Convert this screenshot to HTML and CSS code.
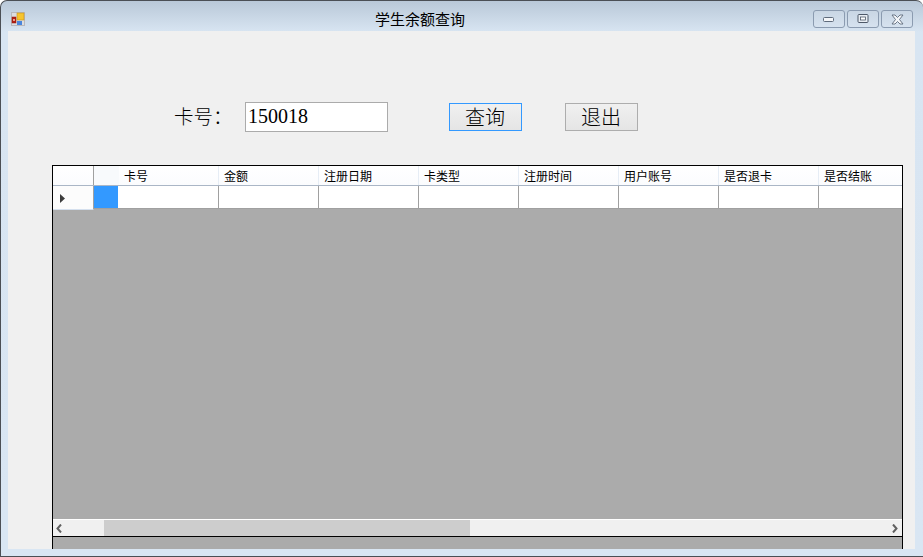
FILE: index.html
```html
<!DOCTYPE html>
<html lang="zh-CN">
<head>
<meta charset="utf-8">
<title>学生余额查询</title>
<link rel="stylesheet" href="styles.css">
</head>
<body>
<div class="window">
  <div class="titlebar">
    <svg class="app-icon" width="16" height="16" viewBox="0 0 16 16">
      <rect x="0.5" y="0.5" width="13" height="13" fill="#dcdde0" stroke="#b8b8bc"/>
      <rect x="1" y="5" width="4" height="6" fill="#b32015" stroke="#8f1a10" stroke-width="0.5"/>
      <rect x="2" y="7" width="2" height="2" fill="#e8a090"/>
      <rect x="6" y="1" width="7" height="7" fill="#f6c42e" stroke="#c8921a" stroke-width="0.6"/>
      <rect x="6" y="9" width="5" height="4" fill="#4a86dc"/>
    </svg>
    <div class="title">学生余额查询</div>
    <div class="caption-buttons">
      <div class="caption-btn">
        <svg width="12" height="8" viewBox="0 0 12 8"><rect x="0.5" y="2.500" width="10" height="4" rx="1" fill="#f4f6f9" stroke="#5f6b7c"/></svg>
      </div>
      <div class="caption-btn">
        <svg width="12" height="10" viewBox="0 0 12 10"><rect x="1" y="0.5" width="10" height="8" rx="1" fill="#e8edf3" stroke="#4d5868"/><rect x="3.5" y="3" width="5" height="3" fill="#fff" stroke="#4d5868" stroke-width="0.8"/></svg>
      </div>
      <div class="caption-btn">
        <svg width="13" height="11" viewBox="0 0 13 11"><path d="M1 1h3l2.500 2.500L9 1h3L8.500 5.500 12 10H9L6.500 7.500 4 10H1l3.500-4.500z" fill="#f4f6f9" stroke="#5f6b7c" stroke-width="0.9"/></svg>
      </div>
    </div>
  </div>
  <div class="client">
    <div class="form-row">
      <label class="card-label">卡号：</label>
      <input class="card-input" type="text" value="150018">
      <button class="action focused">查询</button>
      <button class="action exit">退出</button>
    </div>
    <div class="data-grid">
      <div class="grid-head">
        <div class="head-cell row-head"></div>
        <div class="head-cell extra-head"></div>
        <div class="head-cell col">卡号</div>
        <div class="head-cell col">金额</div>
        <div class="head-cell col">注册日期</div>
        <div class="head-cell col">卡类型</div>
        <div class="head-cell col">注册时间</div>
        <div class="head-cell col">用户账号</div>
        <div class="head-cell col">是否退卡</div>
        <div class="head-cell col last">是否结账</div>
      </div>
      <div class="grid-row">
        <div class="row-marker"><svg class="marker" width="5" height="9" viewBox="0 0 5 9"><path d="M0 0l5 4.500-5 4.500z" fill="#3c3c3c"/></svg></div>
        <div class="cell selected"></div>
        <div class="cell col first"></div>
        <div class="cell col"></div>
        <div class="cell col"></div>
        <div class="cell col"></div>
        <div class="cell col"></div>
        <div class="cell col"></div>
        <div class="cell col"></div>
        <div class="cell col last"></div>
      </div>
      <div class="grid-empty"></div>
      <div class="hscroll">
        <svg class="arrow" width="8" height="9" viewBox="0 0 8 9"><path d="M5 0.500L1.500 4.500 5 8.500" fill="none" stroke="#606060" stroke-width="2"/></svg>
        <div class="track"><div class="thumb"></div></div>
        <svg class="arrow arrow-right" width="8" height="9" viewBox="0 0 8 9"><path d="M3 0.500L6.500 4.500 3 8.500" fill="none" stroke="#606060" stroke-width="2"/></svg>
      </div>
      <div class="grid-foot"></div>
    </div>
  </div>
</div>
</body>
</html>
```
FILE: styles.css
```css
* { box-sizing: border-box; }
html, body { margin: 0; padding: 0; }
body { width: 923px; height: 557px; overflow: hidden; background: #fff; }

.window {
  width: 923px;
  height: 557px;
  display: flex;
  flex-direction: column;
  padding: 0 8px 7px 7px;
  background: linear-gradient(#b9c8d8 0, #d8e5f2 31px, #d9e6f3 100%);
  border: 1px solid #4b4f55;
  border-right: 0;
  border-radius: 7px 7px 0 0;
  font-family: "Noto Sans CJK SC", sans-serif;
  color: #000;
}

.titlebar {
  height: 30px;
  flex: none;
  display: flex;
  align-items: flex-start;
  position: relative;
}
.app-icon { margin: 11px 0 0 3px; flex: none; }
.title {
  position: absolute;
  left: 367px;
  top: 8px;
  font-size: 15px;
  line-height: 20px;
  white-space: nowrap;
}
.caption-buttons {
  margin-left: auto;
  margin-top: 9px;
  margin-right: 2px;
  display: flex;
  gap: 2px;
}
.caption-btn {
  width: 32px;
  height: 18px;
  display: flex;
  align-items: center;
  justify-content: center;
  border: 1px solid #8b9bb0;
  border-radius: 3px;
  background: linear-gradient(#c9d6e4, #d6e2ef);
}

.client {
  flex: 1;
  min-height: 0;
  background: #f0f0f0;
  display: flex;
  flex-direction: column;
}

.form-row {
  flex: none;
  height: 30px;
  margin-top: 71px;
  padding-left: 166px;
  display: flex;
  align-items: center;
}
.card-label {
  width: 71px;
  padding-bottom: 2px;
  font-size: 19.500px;
  font-weight: 300;
  line-height: 28px;
  color: #000;
  white-space: nowrap;
}
.card-input {
  width: 143px;
  height: 30px;
  border: 1px solid #ababab;
  background: #fff;
  padding: 0 2px 2px;
  font-family: "Liberation Serif", serif;
  font-size: 20px;
  color: #000;
  outline: 0;
}
.action {
  width: 73px;
  height: 28px;
  padding: 0 1px 0 0;
  border: 1px solid #adadad;
  background: linear-gradient(#f0f0f0, #e5e5e5);
  font-family: "Noto Sans CJK SC", sans-serif;
  font-size: 20px;
  font-weight: 300;
  line-height: 26px;
  color: #000;
}
.action.focused { margin-left: 61px; border-color: #3399ff; }
.action.exit { margin-left: 43px; }

.data-grid {
  flex: 1;
  min-height: 0;
  margin: 33px 12px 0 44px;
  border: solid #000;
  border-width: 1px 1px 0 1px;
  background: #ababab;
  display: flex;
  flex-direction: column;
  overflow: hidden;
  font-size: 12px;
}
.grid-head {
  flex: none;
  height: 20px;
  display: flex;
  background: #fff;
  border-bottom: 1px solid #aab6c6;
}
.head-cell {
  flex: none;
  line-height: 19px;
  padding-left: 5px;
  border-right: 1px solid #e6edf5;
  background: linear-gradient(#ffffff, #fbfcfe);
  white-space: nowrap;
  color: #000;
}
.row-head { width: 41px; border-right-color: #a0a0a0; }
.extra-head { width: 25px; background: #f8fafc; border-right: 0; }
.col { width: 100px; flex: none; }
.last { border-right: 0; }

.grid-row {
  flex: none;
  height: 24px;
  display: flex;
}
.row-marker {
  flex: none;
  width: 41px;
  height: 24px;
  padding: 8px 0 0 7px;
  background: #fcfcfc;
  border-right: 1px solid #a0a0a0;
  border-bottom: 1px solid #d5e0ee;
}
.marker { display: block; }
.cell {
  flex: none;
  height: 23px;
  background: #fff;
  border-right: 1px solid #a0a0a0;
  border-bottom: 1px solid #a0a0a0;
}
.cell.last { border-right: 0; }
.cell.selected { width: 24px; background: #3399ff; border: 0; border-bottom: 1px solid #a0a0a0; }
.cell.first { width: 101px; }

.grid-empty { flex: 1; min-height: 0; }

.hscroll {
  flex: none;
  height: 18px;
  display: flex;
  align-items: center;
  background: #f0f0f0;
  border-top: 1px solid #fff;
  border-bottom: 1px solid #000;
}
.arrow { flex: none; margin: 0 5px 0 3px; }
.arrow.arrow-right { margin: 0 4px 0 4px; }
.track { flex: 1; height: 100%; }
.thumb { width: 366px; height: 100%; margin-left: 35px; background: #cdcdcd; }
.grid-foot { flex: none; height: 12px; }
```
